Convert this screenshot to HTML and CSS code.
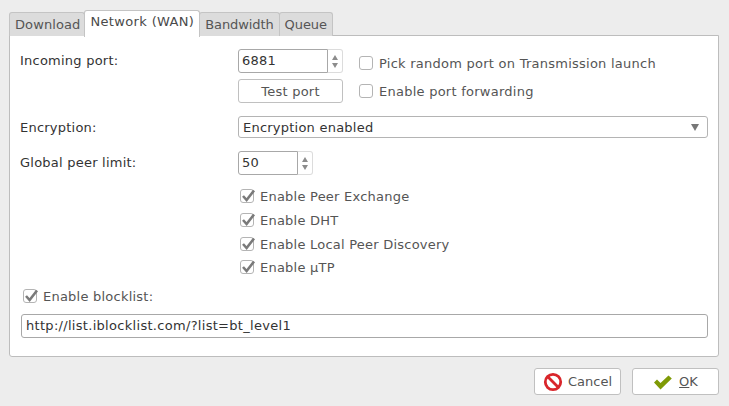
FILE: index.html

```html
<!DOCTYPE html>
<html lang="en">
<head>
  <meta charset="UTF-8" />
  <title>Transmission Preferences</title>
  <link rel="stylesheet" href="styles.css">
</head>
<body>
  <div class="tabs">
    <div class="tab">Download</div>
    <div class="tab active">Network (WAN)</div>
    <div class="tab">Bandwidth</div>
    <div class="tab">Queue</div>
  </div>

  <div class="panel">
    <div class="port-row">
      <div class="label">Incoming port:</div>
      <div class="port-fields">
        <div class="spin spin-port">
          <div class="spin-input">6881</div>
          <div class="spin-arrows"><span class="up"></span><span class="down"></span></div>
        </div>
        <div class="btn test-btn">Test port</div>
      </div>
      <div class="port-checks">
        <div class="check"><span class="box"></span>Pick random port on Transmission launch</div>
        <div class="check"><span class="box"></span>Enable port forwarding</div>
      </div>
    </div>

    <div class="enc-row">
      <div class="label">Encryption:</div>
      <div class="select">Encryption enabled<span class="select-arrow"></span></div>
    </div>

    <div class="peer-row">
      <div class="label">Global peer limit:</div>
      <div class="spin spin-peer">
        <div class="spin-input">50</div>
        <div class="spin-arrows"><span class="up"></span><span class="down"></span></div>
      </div>
    </div>

    <div class="check-list">
      <div class="check"><span class="box"><svg viewBox="0 0 16 16"><path d="M3 8l3.6 4L14 2.5" /></svg></span>Enable Peer Exchange</div>
      <div class="check"><span class="box"><svg viewBox="0 0 16 16"><path d="M3 8l3.6 4L14 2.5" /></svg></span>Enable DHT</div>
      <div class="check"><span class="box"><svg viewBox="0 0 16 16"><path d="M3 8l3.6 4L14 2.5" /></svg></span>Enable Local Peer Discovery</div>
      <div class="check check-last"><span class="box"><svg viewBox="0 0 16 16"><path d="M3 8l3.6 4L14 2.5" /></svg></span>Enable µTP</div>
    </div>

    <div class="check blocklist"><span class="box"><svg viewBox="0 0 16 16"><path d="M3 8l3.6 4L14 2.5" /></svg></span>Enable blocklist:</div>
    <div class="url-input">http://list.iblocklist.com/?list=bt_level1</div>
  </div>

  <div class="actions">
    <div class="btn action-btn">
      <svg class="icon" viewBox="0 0 20 20"><circle cx="10" cy="10" r="7.7" /><path d="M4.8 4.8l10.4 10.4" /></svg>
      Cancel
    </div>
    <div class="btn action-btn">
      <svg class="icon-ok" viewBox="0 0 20 20"><path d="M1 10.5l3-3 3.5 3.5 8-7.5 3.3 3-11.3 11z" /></svg>
      <span><u>O</u>K</span>
    </div>
  </div>
</body>
</html>
```

FILE: styles.css

```css
body {
  font-family: "DejaVu Sans", sans-serif;
  font-size: 13px;
  letter-spacing: 0.23px;
  margin: 0;
  height: 406px;
  overflow: hidden;
  background-color: #ededed;
  color: #3a3a3a;
}

/* Tabs */
.tabs {
  display: flex;
  align-items: flex-end;
  height: 26px;
  padding: 10px 0 0 9px;
  position: relative;
  z-index: 1;
}

.tab {
  box-sizing: border-box;
  height: 24px;
  padding: 4px 5px 0;
  margin-right: -1px;
  background-color: #dcdcdc;
  border: 1px solid #c4c4c4;
  border-bottom: none;
  border-radius: 3px 3px 0 0;
  color: #555;
  letter-spacing: -0.1px;
}

.tab:first-child {
  padding-right: 4px;
  letter-spacing: 0.1px;
}

.tab.active {
  height: 27px;
  margin-bottom: -1px;
  padding-top: 3px;
  background-color: white;
  color: #4a4a4a;
  letter-spacing: 0.35px;
}

/* Main panel */
.panel {
  box-sizing: border-box;
  width: 710px;
  height: 322px;
  margin: -1px 0 0 9px;
  padding: 13px 10px 0;
  background-color: white;
  border: 1px solid #bdbdbd;
  border-radius: 0 0 3px 3px;
}

.label {
  width: 218px;
  flex-shrink: 0;
  color: #333;
}

.port-row {
  display: flex;
}

.port-row .label {
  padding-top: 4px;
}

.port-fields {
  display: flex;
  flex-direction: column;
  gap: 6px;
  width: 105px;
}

.port-checks {
  display: flex;
  flex-direction: column;
  gap: 12px;
  padding: 7px 0 0 16px;
  letter-spacing: 0.25px;
}

.spin {
  display: flex;
  height: 24px;
  box-sizing: border-box;
}

.spin-port {
  width: 105px;
}

.spin-peer {
  width: 75px;
}

.spin-input {
  flex: 1;
  box-sizing: border-box;
  padding: 3px 3px;
  border: 1px solid #a8a8a8;
  border-radius: 3px 0 0 3px;
  background-color: white;
  color: #333;
}

.spin-arrows {
  width: 15px;
  box-sizing: border-box;
  display: flex;
  flex-direction: column;
  align-items: center;
  justify-content: center;
  gap: 3px;
  border: 1px solid #dcdcdc;
  border-left: none;
  border-radius: 0 3px 3px 0;
}

.spin-arrows .up {
  border-left: 3px solid transparent;
  border-right: 3px solid transparent;
  border-bottom: 5px solid #8c8c8c;
}

.spin-arrows .down {
  border-left: 3px solid transparent;
  border-right: 3px solid transparent;
  border-top: 5px solid #8c8c8c;
}

.btn {
  box-sizing: border-box;
  display: flex;
  align-items: center;
  justify-content: center;
  background-color: white;
  border: 1px solid #c0c0c0;
  border-radius: 3px;
  color: #555;
}

.test-btn {
  height: 24px;
}

.enc-row {
  display: flex;
  align-items: center;
  margin-top: 13px;
}

.select {
  flex: 1;
  box-sizing: border-box;
  height: 22px;
  line-height: 22px;
  padding-left: 4px;
  border: 1px solid #b4b4b4;
  border-radius: 3px;
  position: relative;
  color: #333;
}

.select-arrow {
  position: absolute;
  right: 8px;
  top: 7px;
  border-left: 4px solid transparent;
  border-right: 4px solid transparent;
  border-top: 7px solid #777;
}

.peer-row {
  display: flex;
  margin-top: 13px;
}

.peer-row .label {
  padding-top: 4px;
}

.check {
  display: flex;
  align-items: center;
  color: #555;
  line-height: 16px;
}

.box {
  box-sizing: border-box;
  width: 14px;
  height: 14px;
  margin: -2px 6px 0 0;
  border: 1px solid #b4b4b4;
  border-radius: 3px;
  background-color: white;
  position: relative;
}

.box svg {
  position: absolute;
  left: -1px;
  top: -2px;
  width: 16px;
  height: 16px;
}

.box path {
  fill: none;
  stroke: #7a7a7a;
  stroke-width: 2.6;
}

.check-list {
  display: flex;
  flex-direction: column;
  gap: 8px;
  margin: 14px 0 0 220px;
}

.check-last {
  margin-top: -1px;
}

.blocklist {
  margin: 13px 0 0 3px;
}

.url-input {
  box-sizing: border-box;
  height: 24px;
  line-height: 22px;
  margin: 9px 0 0 1px;
  padding-left: 4px;
  border: 1px solid #a8a8a8;
  border-radius: 3px;
  color: #333;
  letter-spacing: 0.3px;
}

/* Bottom buttons */
.actions {
  display: flex;
  justify-content: flex-end;
  gap: 11px;
  margin: 11px 10px 0 0;
  letter-spacing: 0;
}

.action-btn {
  width: 87px;
  height: 27px;
  gap: 5px;
}

.icon {
  width: 20px;
  height: 20px;
}

.icon circle, .icon path {
  fill: none;
  stroke: #d9262b;
  stroke-width: 2.8;
}

.icon-ok {
  width: 20px;
  height: 20px;
  margin-right: 1px;
}

.icon-ok path {
  fill: #7f9a05;
}
```
